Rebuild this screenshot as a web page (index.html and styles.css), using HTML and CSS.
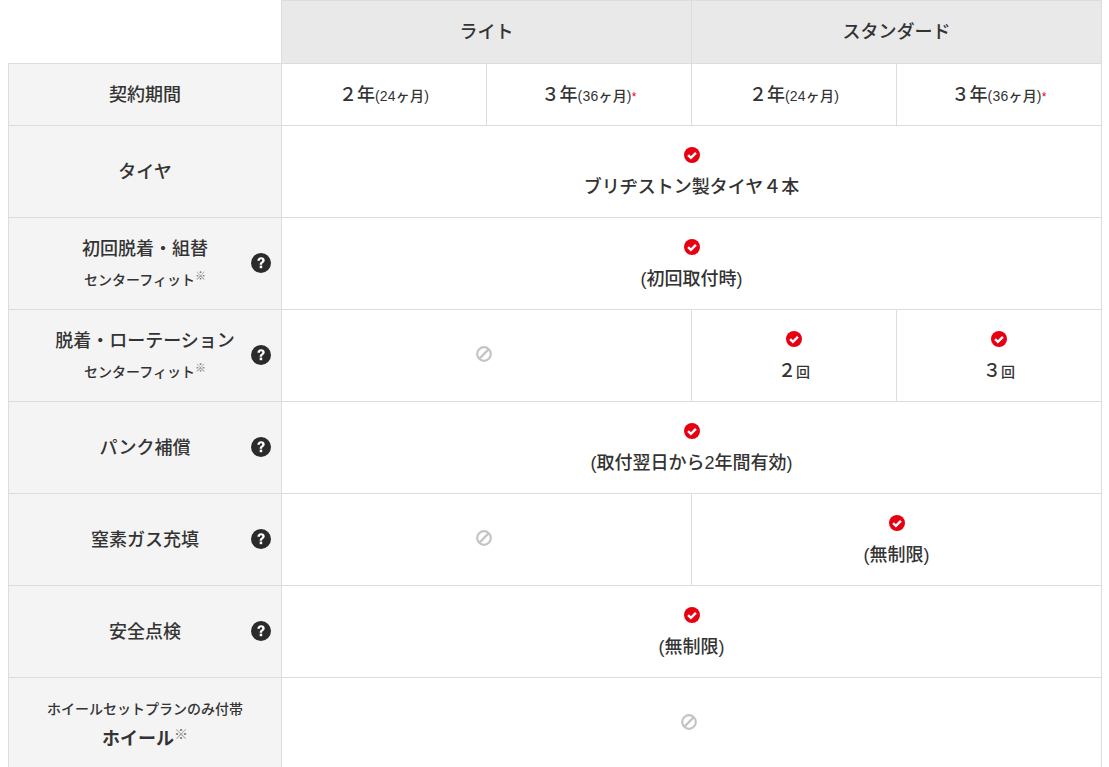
FILE: index.html
```html
<!DOCTYPE html>
<html lang="ja">
<head>
<meta charset="utf-8">
<title>プラン比較</title>
<link rel="stylesheet" href="styles.css">
</head>
<body>
<svg class="defs" width="0" height="0" aria-hidden="true">
  <symbol id="check" viewBox="0 0 16 16"><circle cx="8" cy="8" r="8" fill="#e60012"/><path d="M4.100 8.100l2.800 2.700 5-5" fill="none" stroke="#fff" stroke-width="2.500"/></symbol>
  <symbol id="none" viewBox="0 0 16 16"><circle cx="8" cy="8" r="6.800" fill="none" stroke="#c4c4c4" stroke-width="2.200"/><path d="M3.400 12.600L12.600 3.400" stroke="#c4c4c4" stroke-width="2.200"/></symbol>
  <symbol id="help" viewBox="0 0 20 20"><circle cx="10" cy="10" r="10" fill="#2b2b2b"/><path d="M6.400 7.800c0-2.200 1.500-3.500 3.700-3.500s3.600 1.200 3.600 3c0 2.500-2.600 2.500-2.600 4.400H8.700c0-3 2.500-3 2.500-4.300 0-.7-.4-1.100-1.100-1.100-.8 0-1.200.6-1.200 1.500z" fill="#fff"/><rect x="8.700" y="12.600" width="2.500" height="2.600" fill="#fff"/></symbol>
</svg>
<table class="plans">
  <colgroup><col class="c-head"><col class="c-val"><col class="c-val"><col class="c-val"><col class="c-val"></colgroup>
  <thead>
    <tr class="r-plan">
      <td class="blank"></td>
      <th colspan="2" class="plan">ライト</th>
      <th colspan="2" class="plan">スタンダード</th>
    </tr>
  </thead>
  <tbody>
    <tr class="r-term">
      <th class="label"><div class="label-in"><span class="main">契約期間</span></div></th>
      <td><span class="term">２年</span><span class="mon">(24ヶ月)</span></td>
      <td><span class="term">３年</span><span class="mon">(36ヶ月)</span><span class="star">*</span></td>
      <td><span class="term">２年</span><span class="mon">(24ヶ月)</span></td>
      <td><span class="term">３年</span><span class="mon">(36ヶ月)</span><span class="star">*</span></td>
    </tr>
    <tr>
      <th class="label"><div class="label-in"><span class="main">タイヤ</span></div></th>
      <td colspan="4"><svg class="ico"><use href="#check"/></svg><p class="val">ブリヂストン製タイヤ４本</p></td>
    </tr>
    <tr>
      <th class="label"><div class="label-in has-help has-sub"><span class="main">初回脱着・組替</span><span class="sub">センターフィット<sup class="note">※</sup></span><svg class="help"><use href="#help"/></svg></div></th>
      <td colspan="4"><svg class="ico"><use href="#check"/></svg><p class="val">(初回取付時)</p></td>
    </tr>
    <tr>
      <th class="label"><div class="label-in has-help has-sub"><span class="main">脱着・ローテーション</span><span class="sub">センターフィット<sup class="note">※</sup></span><svg class="help"><use href="#help"/></svg></div></th>
      <td colspan="2"><svg class="ico none"><use href="#none"/></svg></td>
      <td><svg class="ico"><use href="#check"/></svg><p class="val">２<small class="unit">回</small></p></td>
      <td><svg class="ico"><use href="#check"/></svg><p class="val">３<small class="unit">回</small></p></td>
    </tr>
    <tr>
      <th class="label"><div class="label-in has-help"><span class="main">パンク補償</span><svg class="help"><use href="#help"/></svg></div></th>
      <td colspan="4"><svg class="ico"><use href="#check"/></svg><p class="val">(取付翌日から2年間有効)</p></td>
    </tr>
    <tr>
      <th class="label"><div class="label-in has-help"><span class="main">窒素ガス充填</span><svg class="help"><use href="#help"/></svg></div></th>
      <td colspan="2"><svg class="ico none"><use href="#none"/></svg></td>
      <td colspan="2"><svg class="ico"><use href="#check"/></svg><p class="val">(無制限)</p></td>
    </tr>
    <tr>
      <th class="label"><div class="label-in has-help"><span class="main">安全点検</span><svg class="help"><use href="#help"/></svg></div></th>
      <td colspan="4"><svg class="ico"><use href="#check"/></svg><p class="val">(無制限)</p></td>
    </tr>
    <tr>
      <th class="label"><div class="label-in stacked"><span class="pre">ホイールセットプランのみ付帯</span><span class="main big">ホイール<sup class="note big-note">※</sup></span></div></th>
      <td colspan="4"><svg class="ico none"><use href="#none"/></svg></td>
    </tr>
  </tbody>
</table>
</body>
</html>
```
FILE: styles.css
```css
html, body { margin: 0; padding: 0; background: #fff; }
body {
  padding: 0 8px;
  font-family: "Liberation Sans", "Noto Sans CJK JP", sans-serif;
  color: #333;
}
.defs { position: absolute; }
.plans {
  border-collapse: collapse;
  table-layout: fixed;
  width: 1093px;
}
.c-head { width: 273px; }
.c-val { width: 205px; }
.plans th, .plans td {
  border: 1px solid #ddd;
  padding: 0;
  text-align: center;
  vertical-align: middle;
  font-weight: 500;
}
.plans tbody tr { height: 92px; }
.plans .r-term { height: 62px; }
.r-plan { height: 63px; }
.plans .blank { border-width: 0 1px 1px 0; border-color: #ddd; }
.plans .plan {
  background: #e9e9e9;
  font-size: 18px;
  padding-bottom: 4px;
  font-weight: 500;
}
.plans .label { background: #f4f4f4; }
.label-in {
  position: relative;
  display: flex;
  flex-direction: column;
  align-items: center;
  gap: 9px;
}
.main { font-size: 18px; line-height: 24px; font-weight: 500; }
.sub { font-size: 14px; line-height: 20px; font-weight: 500; }
.stacked { gap: 8px; padding-top: 3px; }
.pre { font-size: 14px; line-height: 20px; font-weight: 500; }
.big { font-size: 18px; font-weight: 700; }
.note {
  font-size: 11px;
  color: #777;
  font-weight: 400;
  line-height: 0;
  vertical-align: 5px;
}
.big-note { font-size: 14px; vertical-align: 6px; }
.help {
  position: absolute;
  right: 10px;
  top: 50%;
  width: 20px;
  height: 20px;
  margin-top: -11px;
}
.term { font-size: 18px; font-weight: 500; }
.mon { font-size: 14px; font-weight: 500; letter-spacing: 0.2px; }
.star { font-size: 12px; color: #e60012; }
.r-term td { padding-bottom: 3px; }
.ico { display: block; width: 16px; height: 16px; margin: 0 auto; }
.ico.none { margin: -3px 0 0 calc(50% - 10.5px); }
.val {
  margin: 12px 0 -2px;
  font-size: 18px;
  line-height: 24px;
  font-weight: 500;
}
.unit { font-size: 14px; font-weight: 500; line-height: 0; }
```
